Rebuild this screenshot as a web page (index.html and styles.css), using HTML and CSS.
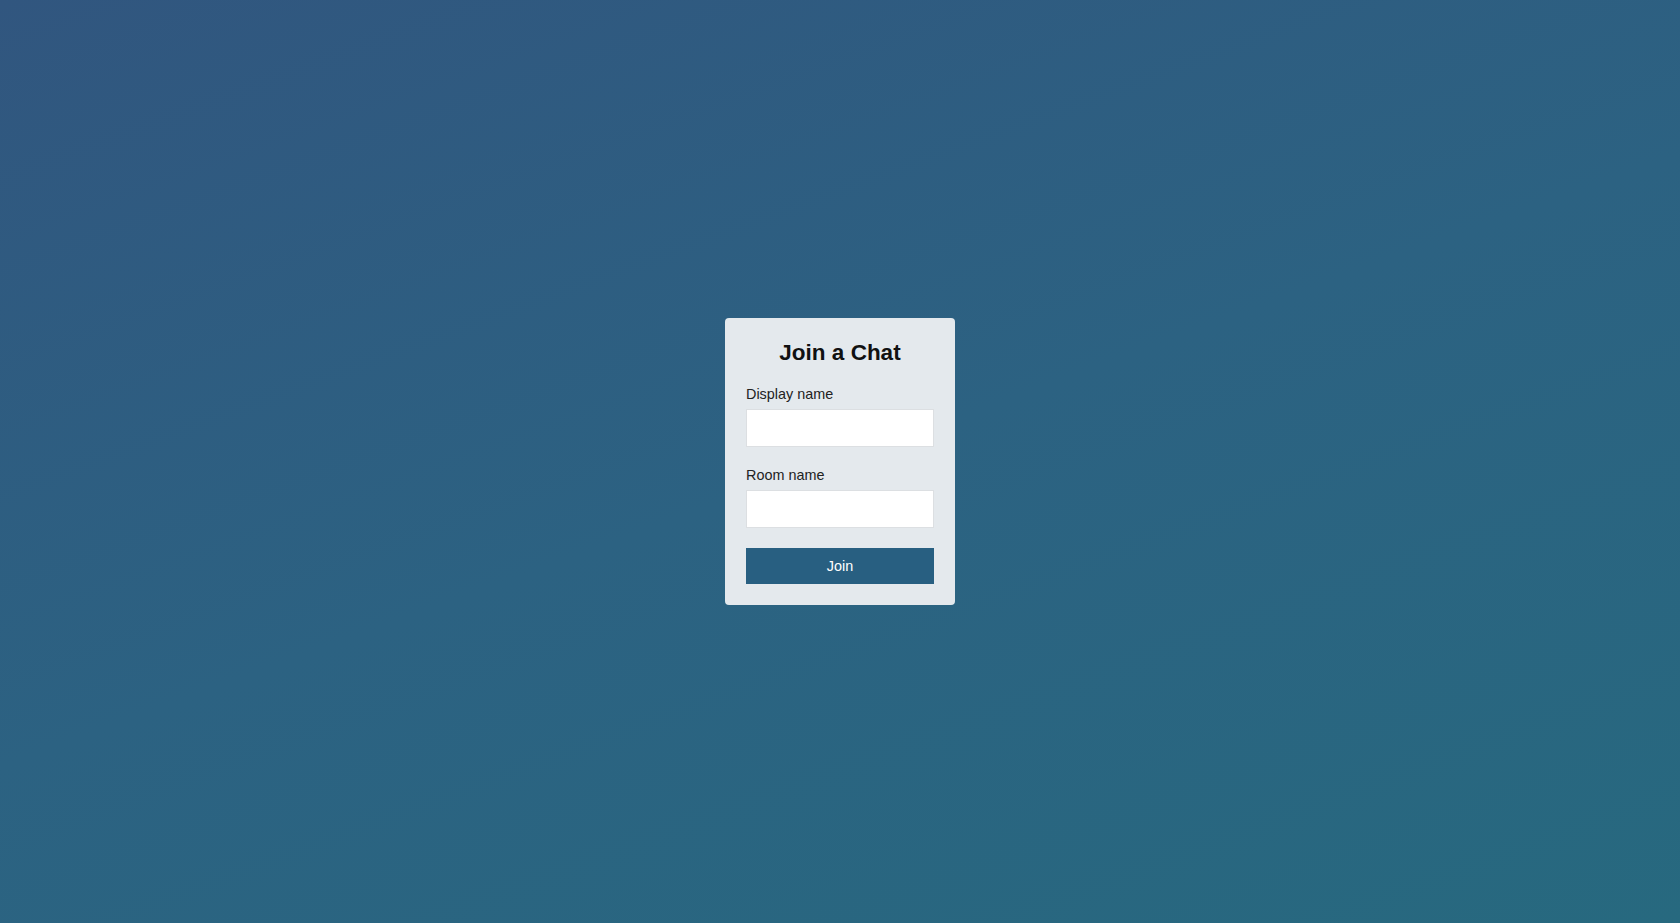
FILE: index.html
```html
<!DOCTYPE html>
<html lang="en">
<head>
<meta charset="utf-8">
<title>Join a Chat</title>
<link rel="stylesheet" href="styles.css">
</head>
<body>
<main class="page">
  <form class="card">
    <h1 class="title">Join a Chat</h1>
    <label class="label" for="display">Display name</label>
    <input class="input" id="display" type="text">
    <label class="label" for="room">Room name</label>
    <input class="input" id="room" type="text">
    <button class="btn" type="button">Join</button>
  </form>
</main>
</body>
</html>
```

FILE: styles.css
```css
* { box-sizing: border-box; }
html, body { margin: 0; padding: 0; height: 100%; }
body {
  font-family: "Liberation Sans", Arial, sans-serif;
  background: linear-gradient(160deg, #31567f 0%, #2c6282 50%, #27697f 100%);
}
.page {
  height: 923px;
  display: flex;
  align-items: flex-start;
  justify-content: center;
  padding-top: 318px;
}
.card {
  width: 230px;
  background: #e4e9ed;
  border-radius: 4px;
  padding: 21px 21px 21px 21px;
  display: flex;
  flex-direction: column;
}
.title {
  margin: 0 0 20px 0;
  font-size: 22.5px;
  font-weight: bold;
  text-align: center;
  color: #111;
  line-height: 27px;
}
.label {
  font-size: 14.4px;
  line-height: 17px;
  color: #222;
  margin-bottom: 6px;
}
.input {
  height: 38px;
  width: 100%;
  border: 1px solid #dcdfe2;
  background: #fff;
  margin: 0 0 20px 0;
  padding: 0 8px;
  font: inherit;
}
.btn {
  height: 36px;
  width: 100%;
  border: none;
  background: #285f81;
  color: #fff;
  font-family: "Liberation Sans", Arial, sans-serif;
  font-size: 14.4px;
  cursor: pointer;
}
```
